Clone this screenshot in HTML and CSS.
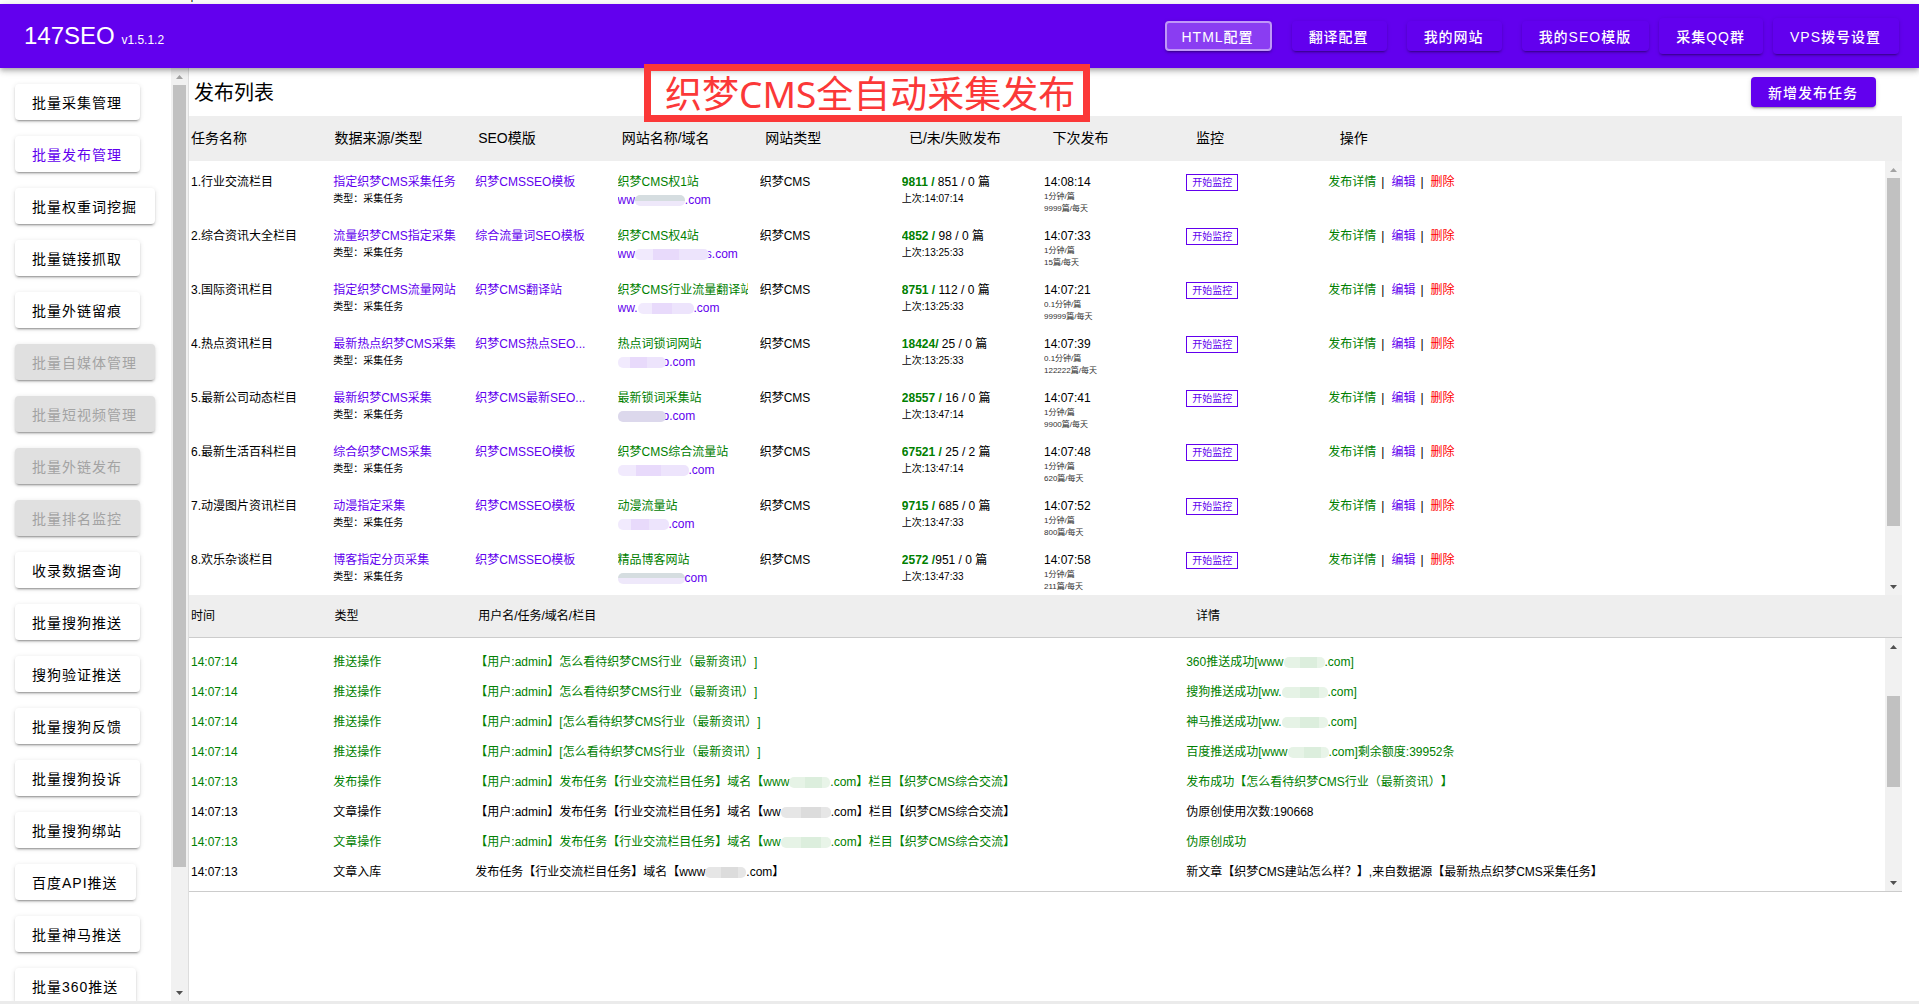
FILE: index.html
```html
<!DOCTYPE html>
<html lang="zh-CN">
<head>
<meta charset="utf-8">
<title>147SEO</title>
<link rel="stylesheet" href="styles.css">
</head>
<body>
<div class="app">
  <div class="topline"><span class="tick"></span></div>
  <header class="appbar">
    <h1 class="brand">147SEO <small>v1.5.1.2</small></h1>
    <nav class="topnav">
      <button class="btn solid compact current">HTML配置</button>
      <button class="btn solid compact">翻译配置</button>
      <button class="btn solid compact">我的网站</button>
      <button class="btn solid compact">我的SEO模版</button>
      <span class="pair">
        <button class="btn solid">采集QQ群</button>
        <button class="btn solid">VPS拨号设置</button>
      </span>
    </nav>
  </header>
  <div class="shell">
    <nav class="sidebar">
      <button class="btn">批量采集管理</button>
      <button class="btn active">批量发布管理</button>
      <button class="btn">批量权重词挖掘</button>
      <button class="btn">批量链接抓取</button>
      <button class="btn">批量外链留痕</button>
      <button class="btn" disabled>批量自媒体管理</button>
      <button class="btn" disabled>批量短视频管理</button>
      <button class="btn" disabled>批量外链发布</button>
      <button class="btn" disabled>批量排名监控</button>
      <button class="btn">收录数据查询</button>
      <button class="btn">批量搜狗推送</button>
      <button class="btn">搜狗验证推送</button>
      <button class="btn">批量搜狗反馈</button>
      <button class="btn">批量搜狗投诉</button>
      <button class="btn">批量搜狗绑站</button>
      <button class="btn">百度API推送</button>
      <button class="btn">批量神马推送</button>
      <button class="btn">批量360推送</button>
    </nav>
    <div class="scrollbar side" aria-hidden="true"><i class="arrow up off"></i><div class="track"><div class="thumb" style="height:87%"></div></div><i class="arrow down"></i></div>
    <main class="main">
      <div class="titlebar">
        <h2>发布列表</h2>
        <button class="btn solid compact">新增发布任务</button>
        <div class="banner">织梦CMS全自动采集发布</div>
      </div>
      <section class="pane">
        <table class="grid tasks">
          <thead>
            <tr><th>任务名称</th><th>数据来源/类型</th><th>SEO模版</th><th>网站名称/域名</th><th>网站类型</th><th>已/未/失败发布</th><th>下次发布</th><th>监控</th><th>操作</th></tr>
          </thead>
          <tbody>
            <tr>
              <td>1.行业交流栏目</td>
              <td><a href="#">指定织梦CMS采集任务</a><small>类型：采集任务</small></td>
              <td><a href="#">织梦CMSSEO模板</a></td>
              <td><a href="#" class="ok">织梦CMS权1站</a><a href="#" class="host">ww<i class="smear mix" style="width:50px"></i>.com</a></td>
              <td>织梦CMS</td>
              <td><span><b>9811 /</b> 851 / 0 篇</span><small>上次:14:07:14</small></td>
              <td><span>14:08:14</span><em>1分钟/篇</em><em>9999篇/每天</em></td>
              <td><button class="watch">开始监控</button></td>
              <td class="ops"><a href="#" class="ok">发布详情</a><s>|</s><a href="#">编辑</a><s>|</s><a href="#" class="bad">删除</a></td>
            </tr>
            <tr>
              <td>2.综合资讯大全栏目</td>
              <td><a href="#">流量织梦CMS指定采集</a><small>类型：采集任务</small></td>
              <td><a href="#">综合流量词SEO模板</a></td>
              <td><a href="#" class="ok">织梦CMS权4站</a><a href="#" class="host">ww<i class="smear over" style="width:74px"></i>s.com</a></td>
              <td>织梦CMS</td>
              <td><span><b>4852 /</b> 98 / 0 篇</span><small>上次:13:25:33</small></td>
              <td><span>14:07:33</span><em>1分钟/篇</em><em>15篇/每天</em></td>
              <td><button class="watch">开始监控</button></td>
              <td class="ops"><a href="#" class="ok">发布详情</a><s>|</s><a href="#">编辑</a><s>|</s><a href="#" class="bad">删除</a></td>
            </tr>
            <tr>
              <td>3.国际资讯栏目</td>
              <td><a href="#">指定织梦CMS流量网站</a><small>类型：采集任务</small></td>
              <td><a href="#">织梦CMS翻译站</a></td>
              <td><a href="#" class="ok">织梦CMS行业流量翻译站</a><a href="#" class="host">ww.<i class="smear" style="width:56px"></i>.com</a></td>
              <td>织梦CMS</td>
              <td><span><b>8751 /</b> 112 / 0 篇</span><small>上次:13:25:33</small></td>
              <td><span>14:07:21</span><em>0.1分钟/篇</em><em>99999篇/每天</em></td>
              <td><button class="watch">开始监控</button></td>
              <td class="ops"><a href="#" class="ok">发布详情</a><s>|</s><a href="#">编辑</a><s>|</s><a href="#" class="bad">删除</a></td>
            </tr>
            <tr>
              <td>4.热点资讯栏目</td>
              <td><a href="#">最新热点织梦CMS采集</a><small>类型：采集任务</small></td>
              <td><a href="#">织梦CMS热点SEO...</a></td>
              <td><a href="#" class="ok">热点词锁词网站</a><a href="#" class="host"><i class="smear over" style="width:48px"></i>o.com</a></td>
              <td>织梦CMS</td>
              <td><span><b>18424/</b> 25 / 0 篇</span><small>上次:13:25:33</small></td>
              <td><span>14:07:39</span><em>0.1分钟/篇</em><em>122222篇/每天</em></td>
              <td><button class="watch">开始监控</button></td>
              <td class="ops"><a href="#" class="ok">发布详情</a><s>|</s><a href="#">编辑</a><s>|</s><a href="#" class="bad">删除</a></td>
            </tr>
            <tr>
              <td>5.最新公司动态栏目</td>
              <td><a href="#">最新织梦CMS采集</a><small>类型：采集任务</small></td>
              <td><a href="#">织梦CMS最新SEO...</a></td>
              <td><a href="#" class="ok">最新锁词采集站</a><a href="#" class="host"><i class="smear dusk over" style="width:48px"></i>o.com</a></td>
              <td>织梦CMS</td>
              <td><span><b>28557 /</b> 16 / 0 篇</span><small>上次:13:47:14</small></td>
              <td><span>14:07:41</span><em>1分钟/篇</em><em>9900篇/每天</em></td>
              <td><button class="watch">开始监控</button></td>
              <td class="ops"><a href="#" class="ok">发布详情</a><s>|</s><a href="#">编辑</a><s>|</s><a href="#" class="bad">删除</a></td>
            </tr>
            <tr>
              <td>6.最新生活百科栏目</td>
              <td><a href="#">综合织梦CMS采集</a><small>类型：采集任务</small></td>
              <td><a href="#">织梦CMSSEO模板</a></td>
              <td><a href="#" class="ok">织梦CMS综合流量站</a><a href="#" class="host"><i class="smear" style="width:71px"></i>.com</a></td>
              <td>织梦CMS</td>
              <td><span><b>67521 /</b> 25 / 2 篇</span><small>上次:13:47:14</small></td>
              <td><span>14:07:48</span><em>1分钟/篇</em><em>620篇/每天</em></td>
              <td><button class="watch">开始监控</button></td>
              <td class="ops"><a href="#" class="ok">发布详情</a><s>|</s><a href="#">编辑</a><s>|</s><a href="#" class="bad">删除</a></td>
            </tr>
            <tr>
              <td>7.动漫图片资讯栏目</td>
              <td><a href="#">动漫指定采集</a><small>类型：采集任务</small></td>
              <td><a href="#">织梦CMSSEO模板</a></td>
              <td><a href="#" class="ok">动漫流量站</a><a href="#" class="host"><i class="smear" style="width:51px"></i>.com</a></td>
              <td>织梦CMS</td>
              <td><span><b>9715 /</b> 685 / 0 篇</span><small>上次:13:47:33</small></td>
              <td><span>14:07:52</span><em>1分钟/篇</em><em>800篇/每天</em></td>
              <td><button class="watch">开始监控</button></td>
              <td class="ops"><a href="#" class="ok">发布详情</a><s>|</s><a href="#">编辑</a><s>|</s><a href="#" class="bad">删除</a></td>
            </tr>
            <tr>
              <td>8.欢乐杂谈栏目</td>
              <td><a href="#">博客指定分页采集</a><small>类型：采集任务</small></td>
              <td><a href="#">织梦CMSSEO模板</a></td>
              <td><a href="#" class="ok">精品博客网站</a><a href="#" class="host"><i class="smear mix" style="width:67px"></i>com</a></td>
              <td>织梦CMS</td>
              <td><span><b>2572 /</b>951 / 0 篇</span><small>上次:13:47:33</small></td>
              <td><span>14:07:58</span><em>1分钟/篇</em><em>211篇/每天</em></td>
              <td><button class="watch">开始监控</button></td>
              <td class="ops"><a href="#" class="ok">发布详情</a><s>|</s><a href="#">编辑</a><s>|</s><a href="#" class="bad">删除</a></td>
            </tr>
          </tbody>
        </table>
        <div class="scrollbar" aria-hidden="true"><i class="arrow up off"></i><div class="track"><div class="thumb" style="height:87%"></div></div><i class="arrow down"></i></div>
      </section>
      <section class="pane log-pane">
        <table class="grid log">
          <thead>
            <tr><th>时间</th><th>类型</th><th>用户名/任务/域名/栏目</th><th>详情</th></tr>
          </thead>
          <tbody>
            <tr class="ok"><td>14:07:14</td><td>推送操作</td><td>【用户:admin】怎么看待织梦CMS行业（最新资讯）]</td><td>360推送成功[www<i class="smear" style="width:41px"></i>.com]</td></tr>
            <tr class="ok"><td>14:07:14</td><td>推送操作</td><td>【用户:admin】怎么看待织梦CMS行业（最新资讯）]</td><td>搜狗推送成功[ww.<i class="smear" style="width:46px"></i>.com]</td></tr>
            <tr class="ok"><td>14:07:14</td><td>推送操作</td><td>【用户:admin】[怎么看待织梦CMS行业（最新资讯）]</td><td>神马推送成功[ww.<i class="smear" style="width:46px"></i>.com]</td></tr>
            <tr class="ok"><td>14:07:14</td><td>推送操作</td><td>【用户:admin】[怎么看待织梦CMS行业（最新资讯）]</td><td>百度推送成功[www<i class="smear" style="width:41px"></i>.com]剩余额度:39952条</td></tr>
            <tr class="ok"><td>14:07:13</td><td>发布操作</td><td>【用户:admin】发布任务【行业交流栏目任务】域名【www<i class="smear" style="width:41px"></i>.com】栏目【织梦CMS综合交流】</td><td>发布成功【怎么看待织梦CMS行业（最新资讯）】</td></tr>
            <tr><td>14:07:13</td><td>文章操作</td><td>【用户:admin】发布任务【行业交流栏目任务】域名【ww<i class="smear" style="width:50px"></i>.com】栏目【织梦CMS综合交流】</td><td>伪原创使用次数:190668</td></tr>
            <tr class="ok"><td>14:07:13</td><td>文章操作</td><td>【用户:admin】发布任务【行业交流栏目任务】域名【ww<i class="smear" style="width:50px"></i>.com】栏目【织梦CMS综合交流】</td><td>伪原创成功</td></tr>
            <tr><td>14:07:13</td><td>文章入库</td><td>发布任务【行业交流栏目任务】域名【www<i class="smear" style="width:41px"></i>.com】</td><td>新文章【织梦CMS建站怎么样？】,来自数据源【最新热点织梦CMS采集任务】</td></tr>
          </tbody>
        </table>
        <div class="scrollbar" aria-hidden="true"><i class="arrow up"></i><div class="track mid"><div class="thumb" style="height:91px"></div></div><i class="arrow down"></i></div>
      </section>
    </main>
  </div>
  <div class="bottomline"></div>
</div>
</body>
</html>
```
FILE: styles.css
```css
* { box-sizing: border-box; }

body {
  margin: 0;
  background: #fff;
  color: #000;
  font: 12px/18px "Liberation Sans", "Noto Sans CJK SC", sans-serif;
  text-spacing-trim: space-all;
}

a { color: #6200ee; text-decoration: none; }
.ok { color: #008000; }
.bad { color: #f00; }

.app { display: flex; flex-direction: column; height: 100vh; }
.topline { flex: none; height: 4px; padding-left: 191px; }
.tick { display: block; width: 2px; height: 2px; background: linear-gradient(90deg, #c87d3c 50%, #4b8fd0 50%); }
.bottomline { flex: none; height: 3px; background: #ebebeb; }

/* Buttons */
.btn {
  flex: none;
  height: 36px;
  padding: 2px 18px 0 17px;
  border: 0;
  border-radius: 4px;
  background: #fff;
  color: #000;
  font: 14px/20px "Liberation Sans", "Noto Sans CJK SC", sans-serif;
  letter-spacing: 1px;
  white-space: nowrap;
  box-shadow: 0 3px 1px -2px rgba(0, 0, 0, .2), 0 2px 2px rgba(0, 0, 0, .14), 0 1px 5px rgba(0, 0, 0, .12);
}
.btn.active { color: #6200ee; }
.btn:disabled { background: #e0e0e0; color: #a3a3a3; }
.btn.solid { background: #6200ee; color: #fff; font-weight: 500; }
.btn.compact { height: 30px; }
.btn.current { background: #8a3df2; border: 2px solid #c097f8; padding: 2px 16px 0 15px; }

/* App bar */
.appbar {
  flex: none;
  position: relative;
  z-index: 1;
  display: flex;
  justify-content: space-between;
  align-items: center;
  height: 64px;
  padding: 0 20px 0 24px;
  background: #6200ee;
  color: #fff;
  box-shadow: 0 2px 4px -1px rgba(0, 0, 0, .2), 0 4px 5px rgba(0, 0, 0, .14), 0 1px 10px rgba(0, 0, 0, .12);
}
.brand { margin: 0; padding-top: 3px; font-size: 24px; font-weight: 400; line-height: 32px; }
.brand small { font-size: 12px; }
.topnav { display: flex; align-items: center; gap: 20px; }
.pair { display: flex; gap: 10px; margin-left: -10px; }

.shell { flex: 1; min-height: 0; display: flex; }
.sidebar {
  flex: none;
  width: 171px;
  padding: 16px 15px 0;
  display: flex;
  flex-direction: column;
  align-items: flex-start;
  gap: 16px;
  overflow: hidden;
}

/* Scroll bars */
.scrollbar { display: flex; flex-direction: column; align-items: center; width: 17px; background: #f1f1f1; }
.scrollbar.side { flex: none; width: 18px; border-right: 1px solid #ddd; }
.track { flex: 1; display: flex; flex-direction: column; }
.track.mid { padding-top: 41px; }
.thumb { width: 13px; background: #c1c1c1; }
.arrow { flex: none; width: 17px; height: 17px; }
.arrow::before {
  content: "";
  display: block;
  margin: 7px auto 0;
  width: 7px;
  height: 4px;
  background: #505050;
  clip-path: polygon(0 0, 100% 0, 50% 100%);
}
.arrow.up::before { clip-path: polygon(0 100%, 100% 100%, 50% 0); }
.arrow.off::before { background: #a3a3a3; }

/* Content */
.main { flex: 1; min-width: 0; padding-right: 17px; }
.titlebar {
  position: relative;
  display: flex;
  justify-content: space-between;
  align-items: center;
  height: 48px;
  padding: 0 26px 0 5px;
}
.titlebar h2 { margin: 0; padding-top: 2px; font-size: 20px; font-weight: 400; line-height: 28px; }
.banner {
  position: absolute;
  z-index: 2;
  top: -4px;
  left: 455px;
  padding: 2px 8px 0 14px;
  border: 7px solid #fb3838;
  color: #fb3838;
  font: 37px/42px "Noto Sans", "Noto Sans CJK SC", sans-serif;
  white-space: nowrap;
}

.pane { display: grid; grid-template-columns: 1fr 17px; grid-template-rows: 45px auto; }
.log-pane { grid-template-rows: 43px auto; border-bottom: 1px solid #ccc; }
.grid { grid-area: 1 / 1 / 3 / 3; display: block; }
.pane .scrollbar { grid-area: 2 / 2; }
.grid thead, .grid tbody { display: block; }
.grid thead { background: #eee; }
.grid tbody { padding-right: 17px; }
.grid tr { display: grid; grid-template-columns: repeat(12, minmax(0, 1fr)); column-gap: 12px; padding-left: 2px; }
.grid th, .grid td { padding: 0; text-align: left; font-weight: 400; white-space: nowrap; }

.tasks th { font-size: 14px; line-height: 45px; }
.tasks tbody { padding-bottom: 2px; }
.tasks tbody tr { height: 54px; padding-top: 12px; }
.tasks td { display: flex; flex-direction: column; align-items: flex-start; overflow: hidden; }
.tasks small { font-size: 10px; line-height: 16px; }
.tasks em { font-size: 8px; line-height: 12px; font-style: normal; color: #333; }
.tasks b { color: #008000; }
.tasks td.ops { flex-direction: row; overflow: visible; }
.ops s { margin: 0 7px 0 5px; text-decoration: none; }
.watch {
  height: 17px;
  margin-top: 1px;
  padding: 0 5px;
  border: 1px solid #6200ee;
  background: #fff;
  color: #6200ee;
  font: 10px/15px "Liberation Sans", "Noto Sans CJK SC", sans-serif;
}

.log th { line-height: 42px; }
.log thead { border-bottom: 1px solid #ccc; }
.log tbody { padding-top: 9px; padding-bottom: 4px; }
.log td { line-height: 30px; }
.log th:nth-child(3), .log td:nth-child(3) { grid-column: span 5; }
.log th:nth-child(4), .log td:nth-child(4) { grid-column: span 5; }

/* Blurred-out part of a domain name */
.smear {
  display: inline-block;
  height: 11px;
  vertical-align: -2px;
  border-radius: 5px;
  background: linear-gradient(90deg, #f1eafd 25%, #e8dafb 25% 60%, #ede4fc 60%);
}
.smear.mix { background: linear-gradient(#d5dde0 50%, #eee8fa 50%); }
.smear.dusk { background: #dcd8ec; }
.smear.over { position: relative; margin-right: -3px; }
.log .smear { background: linear-gradient(90deg, #e6e6e6 40%, #dcdcdc 40% 80%, #e6e6e6 80%); }
.log .ok .smear { background: linear-gradient(90deg, #e6f3e6 40%, #dceedd 40% 80%, #e8f4e8 80%); }
```
